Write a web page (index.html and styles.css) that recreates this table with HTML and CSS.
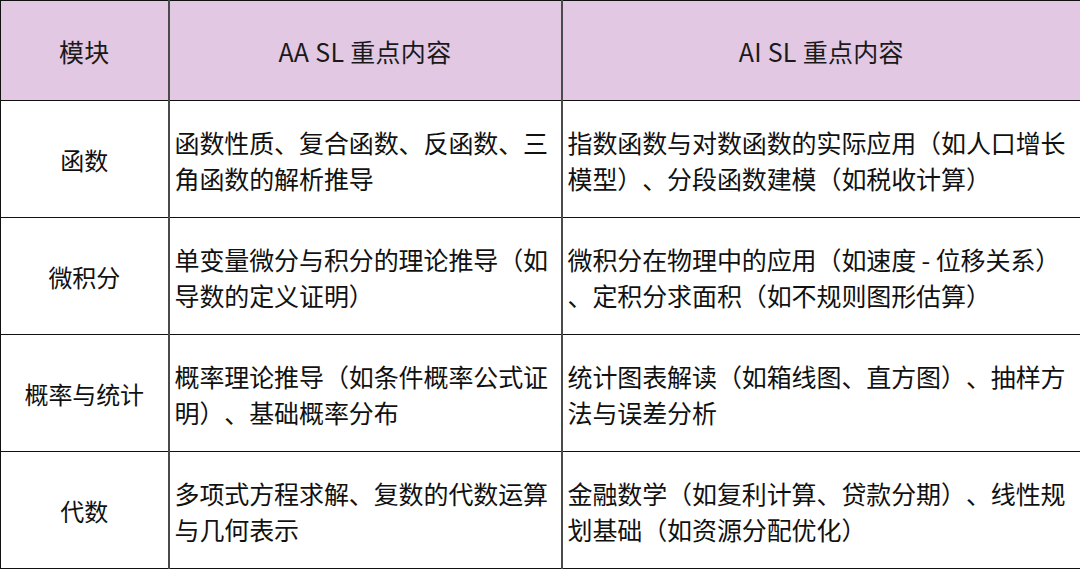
FILE: index.html
```html
<!DOCTYPE html>
<html lang="zh-CN">
<head>
<meta charset="utf-8">
<link rel="stylesheet" href="styles.css">
</head>
<body>
<table class="grid">
  <colgroup>
    <col class="c1">
    <col class="c2">
    <col class="c3">
  </colgroup>
  <thead>
    <tr class="head">
      <th>模块</th>
      <th>AA SL 重点内容</th>
      <th>AI SL 重点内容</th>
    </tr>
  </thead>
  <tbody>
    <tr>
      <td class="label">函数</td>
      <td>函数性质、复合函数、反函数、三<br>角函数的解析推导</td>
      <td>指数函数与对数函数的实际应用（如人口增长<br>模型）、分段函数建模（如税收计算）</td>
    </tr>
    <tr>
      <td class="label">微积分</td>
      <td>单变量微分与积分的理论推导（如<br>导数的定义证明）</td>
      <td>微积分在物理中的应用（如速度 - 位移关系）<br>、定积分求面积（如不规则图形估算）</td>
    </tr>
    <tr>
      <td class="label">概率与统计</td>
      <td>概率理论推导（如条件概率公式证<br>明）、基础概率分布</td>
      <td>统计图表解读（如箱线图、直方图）、抽样方<br>法与误差分析</td>
    </tr>
    <tr>
      <td class="label">代数</td>
      <td>多项式方程求解、复数的代数运算<br>与几何表示</td>
      <td>金融数学（如复利计算、贷款分期）、线性规<br>划基础（如资源分配优化）</td>
    </tr>
  </tbody>
</table>
</body>
</html>
```
FILE: styles.css
```css
html, body {
  margin: 0;
  padding: 0;
  background: #ffffff;
}

body {
  width: 1080px;
  height: 570px;
  overflow: hidden;
  font-family: "Noto Sans CJK SC", "Noto Sans", sans-serif;
  color: #111111;
}

.grid {
  width: 1080px;
  border-collapse: collapse;
  table-layout: fixed;
  text-spacing-trim: space-all;
}

.c1 { width: 168px; }
.c2 { width: 393px; }
.c3 { width: 519px; }

.grid th,
.grid td {
  border-top: 1px solid #111111;
  border-bottom: 1px solid #111111;
  border-left: 2px solid #4a4a4a;
  border-right: 2px solid #4a4a4a;
  padding: 0;
}

.grid th:first-child,
.grid td:first-child {
  border-left: 1px solid #111111;
}

.grid th:last-child,
.grid td:last-child {
  border-right: 1px solid #111111;
}

.head th {
  height: 98px;
  background: #e2c8e3;
  font-weight: 400;
  font-size: 25px;
  text-align: center;
  vertical-align: middle;
  color: #1a1a1a;
  padding-top: 1px;
  letter-spacing: 0.3px;
}

.grid tbody tr {
  height: 117.1px;
}

.grid tbody td {
  font-size: 25px;
  line-height: 36px;
  text-align: left;
  vertical-align: middle;
  padding: 2px 4px 0 5px;
  white-space: nowrap;
  letter-spacing: -0.1px;
}

.grid tbody td.label {
  text-align: center;
  padding: 2px 0 0 0;
  font-size: 24px;
}
```
